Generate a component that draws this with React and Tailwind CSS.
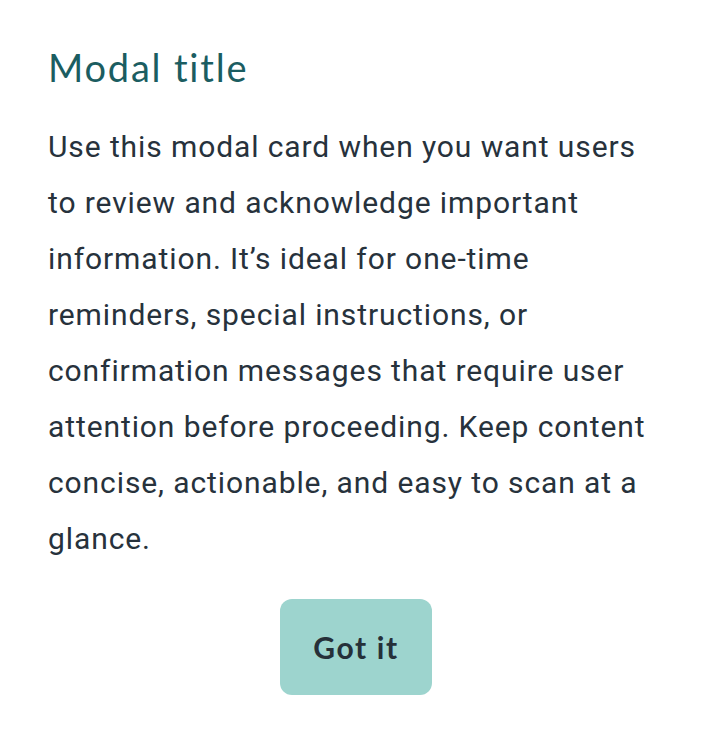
export default function App() {
  return (
    <div className="w-[712px] h-[744px] bg-white px-[48px] pt-[44px] pb-[48px] flex flex-col">
      <h2 className="font-['Lato',sans-serif] text-[38px] leading-[46px] text-[#1b5d61] tracking-[1.8px]">
        Modal title
      </h2>
      <p className="mt-[29px] font-['Roboto',sans-serif] text-[30px] leading-[56px] text-[#27323c] tracking-[0.9px]">
        Use this modal card when you want users to review and acknowledge important information. It’s ideal for one-time reminders, special instructions, or confirmation messages that require user attention before proceeding. Keep content concise, actionable, and easy to scan at a glance.
      </p>
      <div className="mt-[32px] flex justify-center">
        <button className="w-[152px] h-[96px] rounded-[12px] bg-[#9dd4ce] font-['Lato',sans-serif] text-[30px] font-bold text-[#263039] tracking-[1.6px]">
          Got it
        </button>
      </div>
    </div>
  );
}
